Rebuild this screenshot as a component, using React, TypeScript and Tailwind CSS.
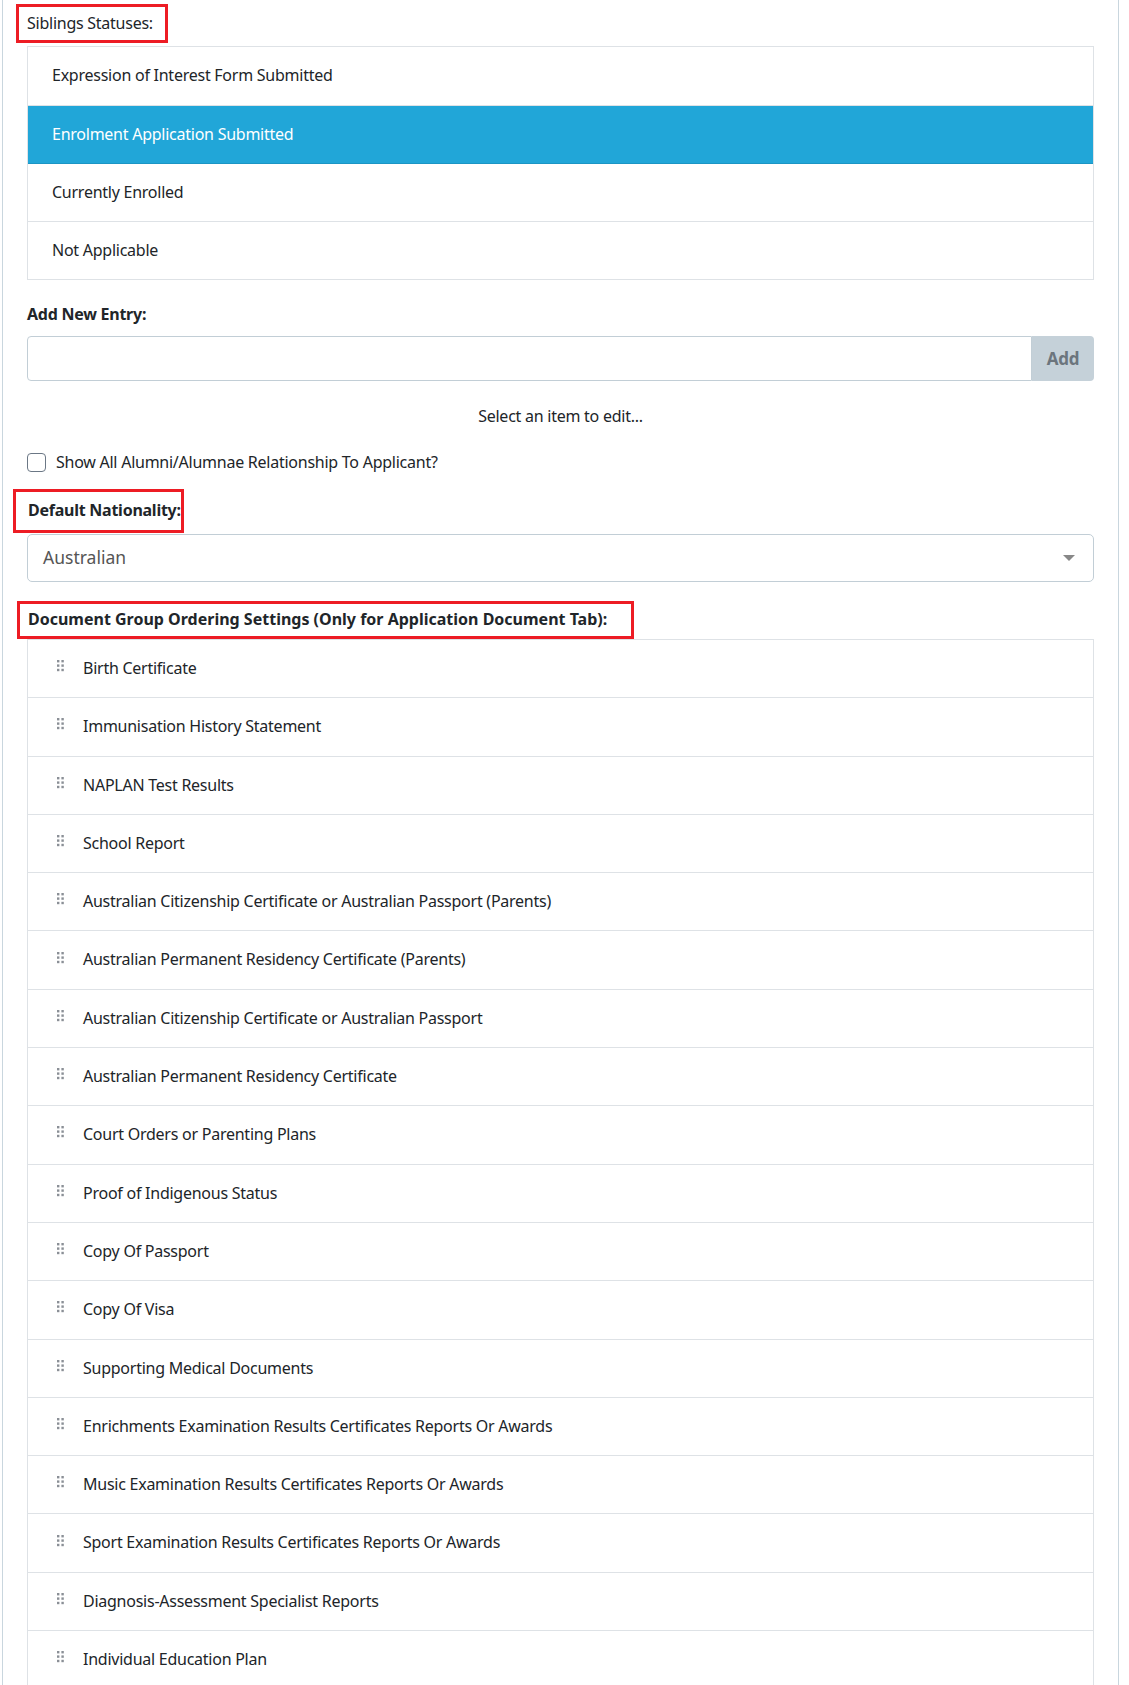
import React from 'react';

const siblingStatuses = [
  'Expression of Interest Form Submitted',
  'Enrolment Application Submitted',
  'Currently Enrolled',
  'Not Applicable',
];

const documentGroups = [
  'Birth Certificate',
  'Immunisation History Statement',
  'NAPLAN Test Results',
  'School Report',
  'Australian Citizenship Certificate or Australian Passport (Parents)',
  'Australian Permanent Residency Certificate (Parents)',
  'Australian Citizenship Certificate or Australian Passport',
  'Australian Permanent Residency Certificate',
  'Court Orders or Parenting Plans',
  'Proof of Indigenous Status',
  'Copy Of Passport',
  'Copy Of Visa',
  'Supporting Medical Documents',
  'Enrichments Examination Results Certificates Reports Or Awards',
  'Music Examination Results Certificates Reports Or Awards',
  'Sport Examination Results Certificates Reports Or Awards',
  'Diagnosis-Assessment Specialist Reports',
  'Individual Education Plan',
];

function DragHandle() {
  return (
    <svg width="8" height="12" viewBox="0 0 8 12" className="shrink-0 text-[#8a8f96]" fill="currentColor">
      <rect x="0" y="0" width="2.4" height="2.4" />
      <rect x="4.4" y="0" width="2.4" height="2.4" />
      <rect x="0" y="4.4" width="2.4" height="2.4" />
      <rect x="4.4" y="4.4" width="2.4" height="2.4" />
      <rect x="0" y="8.8" width="2.4" height="2.4" />
      <rect x="4.4" y="8.8" width="2.4" height="2.4" />
    </svg>
  );
}

export default function App() {
  const active = 1;

  return (
    <div
      className="min-h-[1685px] bg-white text-[#212529] text-[16px] leading-[25.3px] tracking-[-0.25px]"
      style={{ fontFamily: '"Segoe UI", "Noto Sans", "Open Sans", sans-serif' }}
    >
      <div className="ml-[2px] w-[1117px] border-x border-[#c9d6de] px-[24px] pt-[4px] pb-10 min-h-[1685px]">
        {/* Siblings statuses */}
        <div className="-ml-[11px] inline-block border-[3px] border-[#ed1c24] pl-[8px] pr-[12px] py-[4px]">
          Siblings Statuses:
        </div>
        <ul className="mt-[3px] border border-[#dee2e6]">
          {siblingStatuses.map((s, i) => (
            <li
              key={s}
              className={
                i === active
                  ? 'bg-[#21a6d8] text-white px-[24px] py-[16px] border-b border-[#1c95c4]'
                  : 'px-[24px] py-[16px] border-b border-[#dee2e6] last:border-b-0'
              }
            >
              {s}
            </li>
          ))}
        </ul>

        {/* Add new entry */}
        <div className="mt-[22px] font-bold">Add New Entry:</div>
        <div className="mt-[8px] flex h-[45px]">
          <input
            type="text"
            className="flex-1 rounded-l-[4px] border border-[#c2ced6] px-3 outline-none"
          />
          <button className="w-[62px] rounded-r-[4px] bg-[#c5d1d9] text-[17px] font-bold text-[#6c757d]">
            Add
          </button>
        </div>
        <div className="mt-[23px] text-center">Select an item to edit...</div>

        <label className="mt-[21px] flex items-center gap-[10px]">
          <span className="h-[19px] w-[19px] rounded-[4px] border-[1.5px] border-[#6b7785] bg-white" />
          <span>Show All Alumni/Alumnae Relationship To Applicant?</span>
        </label>

        {/* Default nationality */}
        <div className="-ml-[14px] mt-[14px] inline-block border-[3px] border-[#ed1c24] pl-[12px] pr-0 py-[6px] font-bold">
          Default Nationality:
        </div>
        <div className="mt-[1px] flex h-[48px] items-center justify-between rounded-[5px] border border-[#c2ced6] pl-[15px] pr-[18px]">
          <span className="text-[17.5px] tracking-normal text-[#555]">Australian</span>
          <svg width="12" height="6" viewBox="0 0 12 6" className="text-[#888]" fill="currentColor">
            <path d="M0 0h12L6 6z" />
          </svg>
        </div>

        {/* Document group ordering */}
        <div className="-ml-[10px] mt-[19px] inline-block border-[3px] border-[#ed1c24] pl-[8px] pr-[24px] py-[3.5px] font-bold tracking-normal">
          Document Group Ordering Settings (Only for Application Document Tab):
        </div>
        <ul className="border border-[#dee2e6]">
          {documentGroups.map((d) => (
            <li
              key={d}
              className="flex items-center border-b border-[#dee2e6] px-[29px] py-[16px] last:border-b-0"
            >
              <span className="-mt-[5px] w-[26px]">
                <DragHandle />
              </span>
              <span>{d}</span>
            </li>
          ))}
        </ul>
      </div>
    </div>
  );
}
